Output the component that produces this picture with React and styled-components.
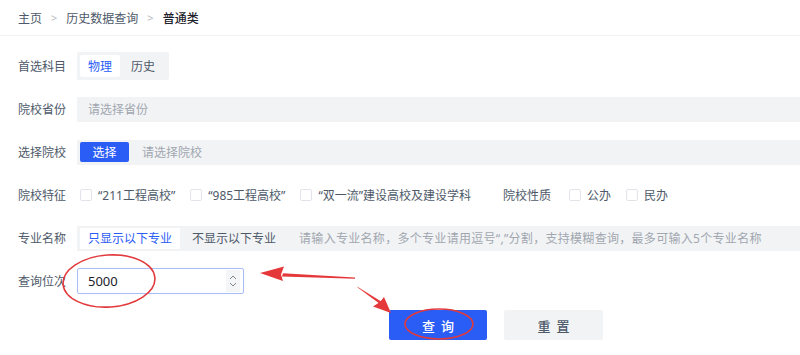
import React from 'react'
import styled, { createGlobalStyle } from 'styled-components'

const Global = createGlobalStyle`
  html, body { margin: 0; padding: 0; background: #fff; }
  body { font-family: "Noto Sans", "Noto Sans CJK SC", sans-serif; }
`

const Page = styled.div`
  position: relative;
  width: 800px;
  height: 355px;
  overflow: hidden;
  background: #fff;
`

const Crumbs = styled.div`
  display: flex;
  align-items: center;
  gap: 9px;
  height: 35px;
  padding-left: 18px;
  border-bottom: 1px solid #f1f2f4;
  font-size: 12px;
  color: #4e5969;
`

const Crumb = styled.span`
  color: ${p => (p.current ? '#1d2129' : '#4e5969')};
  font-weight: ${p => (p.current ? 500 : 400)};
`

const Sep = styled.span`
  color: #b5bac2;
  font-size: 11px;
`

const Form = styled.div`
  display: flex;
  flex-direction: column;
  gap: 15px;
  padding: 16px 0 0 18px;
`

const Row = styled.div`
  display: grid;
  grid-template-columns: 59px 1fr;
  align-items: center;
  height: 28px;
`

const Label = styled.div`
  font-size: 12px;
  color: #4e5969;
  white-space: nowrap;
`

const Segment = styled.div`
  display: inline-flex;
  align-self: stretch;
  align-items: stretch;
  width: fit-content;
  padding: 3px;
  background: #f2f3f5;
  border-radius: 2px;
`

const SegItem = styled.div`
  display: flex;
  align-items: center;
  padding: 0 ${p => p.pad || 12}px;
  font-size: 12px;
  border-radius: 2px;
  background: ${p => (p.active ? '#fff' : 'transparent')};
  color: ${p => (p.active ? '#2a5cf6' : '#4e5969')};
`

const Bar = styled.div`
  display: flex;
  align-items: center;
  height: ${p => p.h || 25}px;
  padding: ${p => p.pad || '0 11px'};
  background: #f2f3f5;
  font-size: 12px;
  color: #a1a7b0;
  gap: ${p => p.gap || 0}px;
  white-space: nowrap;
`

const BlueChip = styled.div`
  display: flex;
  align-items: center;
  justify-content: center;
  width: 49px;
  height: 20px;
  background: #2a5cf6;
  color: #fff;
  border-radius: 2px;
  font-size: 12px;
`

const WhiteChip = styled.div`
  display: flex;
  align-items: center;
  align-self: stretch;
  padding: 0 8px;
  background: #fff;
  color: #2a5cf6;
  margin: 2px 0;
`

const PlainOpt = styled.span`
  color: #4e5969;
  margin: 0 23px 0 12px;
`

const Hint = styled.span`
  letter-spacing: 0.3px;
`

const Checks = styled.div`
  display: flex;
  align-items: center;
  font-size: 12px;
  color: #4e5969;
  white-space: nowrap;
`

const Check = styled.span`
  display: flex;
  align-items: center;
  gap: 6px;
  margin-right: ${p => p.mr || 15}px;
  margin-left: ${p => p.ml || 0}px;
  &::before {
    content: '';
    width: 10px;
    height: 10px;
    border: 1px solid #e1e4e9;
    border-radius: 2px;
    background: #fff;
  }
`

const SubLabel = styled.span`
  color: #4e5969;
  margin: 0 18px 0 17px;
`

const NumberBox = styled.div`
  display: flex;
  align-items: center;
  justify-content: space-between;
  box-sizing: border-box;
  width: 167px;
  height: 26px;
  border: 1px solid #a9bdf8;
  border-radius: 2px;
  background: #fff;
  padding-left: 10px;
  font-size: 13px;
  color: #1d2129;
`

const Spinner = styled.div`
  display: flex;
  flex-direction: column;
  align-items: center;
  justify-content: center;
  width: 14px;
  height: 22px;
  margin-right: 3px;
  background: #f4f5f7;
  gap: 2px;
`

const Actions = styled.div`
  display: flex;
  gap: 17px;
  padding-left: 371px;
`

const Btn = styled.div`
  display: flex;
  align-items: center;
  justify-content: center;
  width: ${p => (p.primary ? 98 : 99)}px;
  height: 30px;
  border-radius: 2px;
  font-size: 13px;
  letter-spacing: 6px;
  text-indent: 6px;
  font-weight: 500;
  background: ${p => (p.primary ? '#2a5cf6' : '#f2f3f5')};
  color: ${p => (p.primary ? '#fff' : '#4e5969')};
`

const Marks = styled.svg`
  position: absolute;
  left: 0;
  top: 0;
  pointer-events: none;
`

const Chevron = ({ up }) => (
  <svg width="8" height="5" viewBox="0 0 8 5">
    <path
      d={up ? 'M1 4 L4 1 L7 4' : 'M1 1 L4 4 L7 1'}
      fill="none"
      stroke="#7d8590"
      strokeWidth="1"
    />
  </svg>
)

export default function App() {
  return (
    <Page>
      <Global />
      <Crumbs>
        <Crumb>主页</Crumb>
        <Sep>&gt;</Sep>
        <Crumb>历史数据查询</Crumb>
        <Sep>&gt;</Sep>
        <Crumb current>普通类</Crumb>
      </Crumbs>

      <Form>
        <Row>
          <Label>首选科目</Label>
          <Segment>
            <SegItem active pad={8}>物理</SegItem>
            <SegItem pad={11}>历史</SegItem>
          </Segment>
        </Row>

        <Row>
          <Label>院校省份</Label>
          <Bar>请选择省份</Bar>
        </Row>

        <Row>
          <Label>选择院校</Label>
          <Bar h={25} pad="0 3px" gap={13}>
            <BlueChip>选择</BlueChip>
            请选择院校
          </Bar>
        </Row>

        <Row>
          <Label>院校特征</Label>
          <Checks>
            <Check ml={3}>“211工程高校”</Check>
            <Check>“985工程高校”</Check>
            <Check>“双一流”建设高校及建设学科</Check>
            <SubLabel>院校性质</SubLabel>
            <Check>公办</Check>
            <Check>民办</Check>
          </Checks>
        </Row>

        <Row>
          <Label>专业名称</Label>
          <Bar h={25} pad="0 3px">
            <WhiteChip>只显示以下专业</WhiteChip>
            <PlainOpt>不显示以下专业</PlainOpt>
            <Hint>请输入专业名称，多个专业请用逗号“,”分割，支持模糊查询，最多可输入5个专业名称</Hint>
          </Bar>
        </Row>

        <Row>
          <Label>查询位次</Label>
          <NumberBox>
            5000
            <Spinner>
              <Chevron up />
              <Chevron />
            </Spinner>
          </NumberBox>
        </Row>

        <Actions>
          <Btn primary>查询</Btn>
          <Btn>重置</Btn>
        </Actions>
      </Form>

      <Marks width="800" height="355" viewBox="0 0 800 355">
        <g fill="none" stroke="#e23a3c" strokeWidth="1.6">
          <ellipse cx="109" cy="281" rx="46" ry="26" transform="rotate(-4 109 281)" />
          <ellipse cx="439" cy="324" rx="34" ry="15" />
        </g>
        <g fill="#e5383a">
          <polygon points="355,277.5 355,278.8 282,276.5 283,273.2" />
          <polygon points="260,273 284,266.5 281,274.5 283,281" />
          <polygon points="357,286.5 358,287.8 380,304 382,302" />
          <polygon points="391,313 373,306.5 380,302 384,297" />
        </g>
      </Marks>
    </Page>
  )
}
